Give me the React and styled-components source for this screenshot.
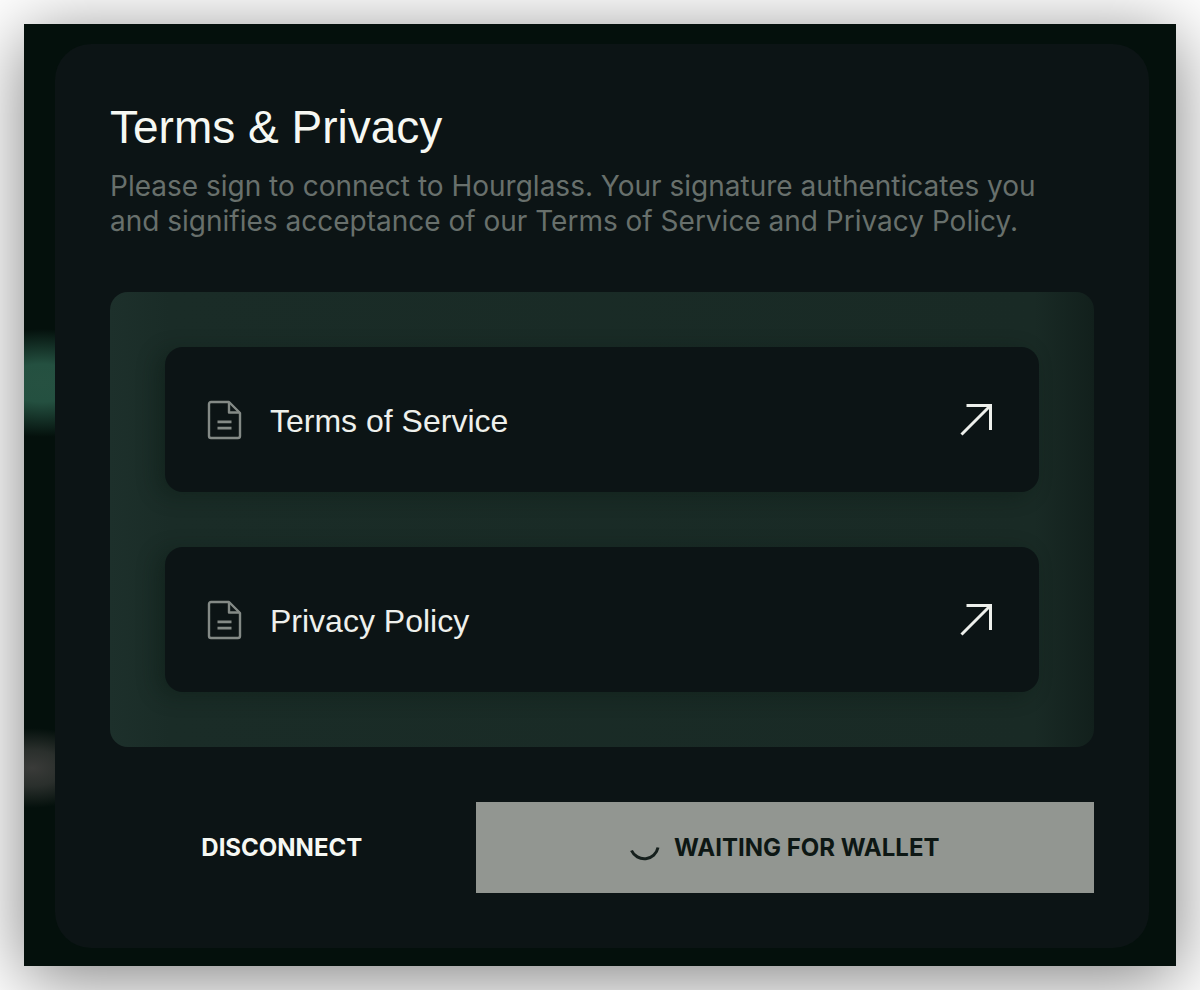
import React from "react";
import styled, { createGlobalStyle } from "styled-components";

const documents = [
  { id: "terms", label: "Terms of Service", href: "#terms" },
  { id: "privacy", label: "Privacy Policy", href: "#privacy" },
];

const DocumentIcon = () => (
  <svg width="35" height="40" viewBox="0 0 35 40" fill="none" stroke="#848a86" strokeWidth="2.4" strokeLinejoin="round" aria-hidden="true">
    <path d="M22 2H4A2 2 0 0 0 2 4V36A2 2 0 0 0 4 38H31A2 2 0 0 0 33 36V13Z" />
    <path d="M22 2V12.500H32.500" />
    <path d="M10.500 21.800H24.500M10.500 28.200H24.500" strokeWidth="2.8" />
  </svg>
);

const ArrowIcon = () => (
  <svg width="34" height="34" viewBox="0 0 34 34" fill="none" stroke="#eef0ec" strokeWidth="3" aria-hidden="true">
    <path d="M7.500 2.500H31.500V27" />
    <path d="M31 3L2.500 31.500" />
  </svg>
);

const SpinnerIcon = () => (
  <svg width="30" height="30" viewBox="0 0 30 30" fill="none" stroke="#16201d" strokeWidth="3" aria-hidden="true">
    <path d="M1.500 17.500A14 14 0 0 0 28 14.500" />
  </svg>
);

const App = () => {
  return (
    <>
      <GlobalStyle />
      <Frame>
        <Card aria-labelledby="title">
          <Title id="title">Terms &amp; Privacy</Title>
          <Description>
            Please sign to connect to Hourglass. Your signature authenticates you
            and signifies acceptance of our Terms of Service and Privacy Policy.
          </Description>

          <Panel>
            {documents.map((doc) => (
              <DocumentLink key={doc.id} href={doc.href}>
                <DocumentIcon />
                <DocumentLabel>{doc.label}</DocumentLabel>
                <ArrowIcon />
              </DocumentLink>
            ))}
          </Panel>

          <Footer>
            <Button type="button">DISCONNECT</Button>
            <Button type="button" $waiting disabled>
              <SpinnerIcon />
              WAITING FOR WALLET
            </Button>
          </Footer>
        </Card>
      </Frame>
    </>
  );
};

const GlobalStyle = createGlobalStyle`
  * {
    box-sizing: border-box;
  }

  body {
    margin: 0;
    padding: 24px;
    background: #fff;
    font-family: Inter, "Liberation Sans", sans-serif;
  }
`;

const Frame = styled.div`
  padding: 20px 27px 18px 31px;
  background:
    radial-gradient(100px 54px at 18px 359px, #265141 0%, #245040 35%, rgba(36, 80, 64, 0) 100%) no-repeat,
    radial-gradient(70px 40px at 8px 744px, #3a3b39 0%, #2a2f2c 45%, rgba(42, 47, 44, 0) 100%) no-repeat,
    #04100c;
  box-shadow: 0 12px 68px rgba(0, 0, 0, 0.5);
`;

const Card = styled.main`
  padding: 55px;
  border-radius: 36px;
  background: #0c1415;
`;

const Title = styled.h1`
  margin: 0;
  color: #f6f8f3;
  font-family: "Liberation Sans", sans-serif;
  font-size: 46px;
  font-weight: 400;
  line-height: 56px;
`;

const Description = styled.p`
  max-width: 960px;
  margin: 14px 0 53px;
  color: #68706c;
  font-size: 28px;
  line-height: 35px;
`;

const Panel = styled.nav`
  display: flex;
  flex-direction: column;
  gap: 55px;
  padding: 55px;
  border-radius: 18px;
  background: linear-gradient(90deg, #1d302b 0%, #1a2c27 6%, #192a25 94%, #12201c 100%);
`;

const DocumentLink = styled.a`
  display: flex;
  align-items: center;
  gap: 28px;
  height: 145px;
  padding: 0 46px 0 42px;
  border-radius: 18px;
  background: #0c1415;
  box-shadow: -8px 4px 20px rgba(10, 24, 18, 0.4);
  color: #eef0ec;
  text-decoration: none;
`;

const DocumentLabel = styled.span`
  flex: 1;
  padding-top: 4px;
  font-family: "Liberation Sans", sans-serif;
  font-size: 32px;
`;

const Footer = styled.div`
  display: grid;
  grid-template-columns: 5fr 9fr;
  gap: 22px;
  margin-top: 55px;
`;

const Button = styled.button`
  display: flex;
  align-items: center;
  justify-content: center;
  gap: 14px;
  height: 91px;
  padding: 0;
  border: 0;
  background: ${(props) => (props.$waiting ? "#929691" : "transparent")};
  color: ${(props) => (props.$waiting ? "#0d1714" : "#f6f8f3")};
  font-family: inherit;
  font-size: 24px;
  font-weight: 700;
`;

export default App;
